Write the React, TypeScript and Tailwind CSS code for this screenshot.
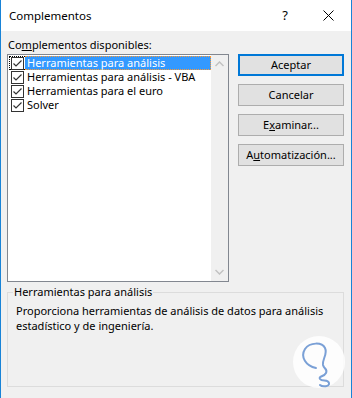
import React from "react";

const items = [
	"Herramientas para análisis",
	"Herramientas para análisis - VBA",
	"Herramientas para el euro",
	"Solver",
];

function CheckBox() {
	return (
		<span className="flex h-[13px] w-[13px] items-center justify-center border border-[#333333] bg-white">
			<svg width="11" height="11" viewBox="0 0 11 11">
				<path d="M1.5 5.5 L4 8 L9.5 2.5" fill="none" stroke="#333333" strokeWidth="1.2" />
			</svg>
		</span>
	);
}

function DlgButton({ children, primary }: { children: React.ReactNode; primary?: boolean }) {
	return (
		<button
			className={
				primary
					? "flex h-[22px] w-[106px] items-center justify-center border-2 border-[#0078d7] bg-[#e1e1e1] text-[11px] text-black"
					: "flex h-[22px] w-[106px] items-center justify-center border border-[#adadad] bg-[#e1e1e1] text-[11px] text-black"
			}
		>
			{children}
		</button>
	);
}

export default function App() {
	return (
		<div
			className="relative flex h-[398px] w-[352px] flex-col overflow-hidden border-x border-[#1883d7] bg-[#f0f0f0] text-[11px] text-black"
			style={{ fontFamily: '"Segoe UI", "Noto Sans", sans-serif' }}
		>
			{/* title bar */}
			<div className="flex h-[31px] shrink-0 items-center bg-white pl-[8px]">
				<span className="flex-1 text-[11.5px]">Complementos</span>
				<span className="mr-[35px] text-[13px]">?</span>
				<svg className="mr-[17px]" width="11" height="11" viewBox="0 0 11 11">
					<path d="M0.5 0.5 L10.5 10.5 M10.5 0.5 L0.5 10.5" stroke="#000" strokeWidth="1" />
				</svg>
			</div>

			<div className="flex flex-1 flex-col px-[6px]">
				<div className="flex gap-[9px]">
					<div className="flex w-[222px] flex-col">
						<div className="mt-[6px] h-[17px] pl-[1px] leading-[16px]">
							Co<span className="underline">m</span>plementos disponibles:
						</div>
						<div className="flex h-[228px] border border-[#828790] bg-white">
							<ul className="flex flex-1 flex-col pl-[1px] pt-[1px]">
								{items.map((it, i) => (
									<li key={it} className="flex h-[14px] items-center leading-[14px]">
										<span
											className={
												i === 0
													? "flex h-[14px] w-[16px] items-center justify-center border-y border-l border-dotted border-black"
													: "flex h-[14px] w-[16px] items-center justify-center"
											}
										>
											<CheckBox />
										</span>
										<span
											className={
												i === 0
													? "flex h-[14px] flex-1 items-center border-y border-r border-dotted border-[#ff9a33] bg-[#3399ff] pl-[2px] text-white"
													: "pl-[2px]"
											}
										>
											{it}
										</span>
									</li>
								))}
							</ul>
							<div className="flex w-[17px] flex-col items-center justify-between bg-[#f0f0f0] py-[6px]">
								<svg width="9" height="6" viewBox="0 0 9 6">
									<path d="M0.5 5 L4.5 1 L8.5 5" fill="none" stroke="#c2c2c2" strokeWidth="1.5" />
								</svg>
								<svg width="9" height="6" viewBox="0 0 9 6">
									<path d="M0.5 1 L4.5 5 L8.5 1" fill="none" stroke="#c2c2c2" strokeWidth="1.5" />
								</svg>
							</div>
						</div>
					</div>

					<div className="mt-[23px] flex flex-col gap-[8px]">
						<DlgButton primary>Aceptar</DlgButton>
						<DlgButton>Cancelar</DlgButton>
						<DlgButton>
							E<span className="underline">x</span>aminar...
						</DlgButton>
						<DlgButton>
							A<span className="underline">u</span>tomatización...
						</DlgButton>
					</div>
				</div>

				<fieldset className="mt-[2px] h-[103px] w-[337px] border border-[#dcdcdc] px-[8px]">
					<legend className="-ml-[3px] px-[1px] leading-[16px]">Herramientas para análisis</legend>
					<p className="mt-[3px] leading-[15px]">
						Proporciona herramientas de análisis de datos para análisis estadístico y de ingeniería.
					</p>
				</fieldset>
			</div>

			{/* watermark */}
			<svg className="absolute left-[291px] top-[335px]" width="54" height="56" viewBox="0 0 54 56">
				<circle cx="27" cy="27" r="26" fill="#ffffff" fillOpacity="0.85" />
				<path
					d="M24 33 C14 31 8 22 13 14 C18 7 30 7 33 13 C36 19 30 24 31 30 C32 34 36 34 34 38 C32 42 26 41 28 44 C30 47 36 44 37 48 C38 52 30 52 28 50"
					fill="none"
					stroke="#7aa0d6"
					strokeWidth="2"
					strokeLinecap="round"
				/>
			</svg>
		</div>
	);
}
